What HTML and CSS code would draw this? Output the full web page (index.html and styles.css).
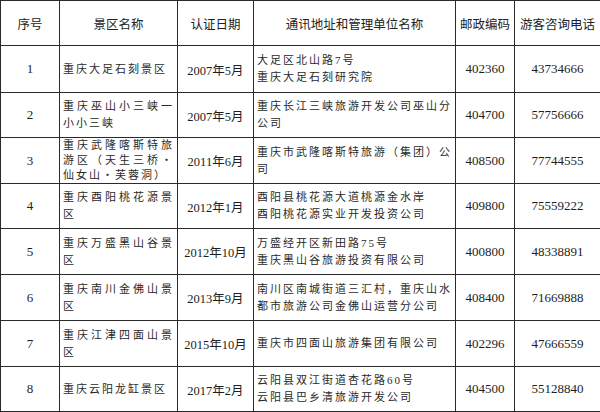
FILE: index.html
```html
<!DOCTYPE html>
<html lang="zh-CN">
<head>
<meta charset="utf-8">
<title>景区名单</title>
<link rel="stylesheet" href="styles.css">
</head>
<body>
<table class="list">
  <colgroup>
    <col class="c-no"><col class="c-name"><col class="c-date"><col class="c-addr"><col class="c-zip"><col class="c-tel">
  </colgroup>
  <thead>
    <tr class="h45">
      <th>序号</th><th>景区名称</th><th>认证日期</th><th>通讯地址和管理单位名称</th><th>邮政编码</th><th>游客咨询电话</th>
    </tr>
  </thead>
  <tbody>
    <tr class="h47">
      <td class="num">1</td><td class="txt">重庆大足石刻景区</td><td class="date">2007年5月</td>
      <td class="txt">大足区北山路7号<br>重庆大足石刻研究院</td><td class="num">402360</td><td class="num">43734666</td>
    </tr>
    <tr class="h45">
      <td class="num">2</td><td class="txt">重庆巫山小三峡一小小三峡</td><td class="date">2007年5月</td>
      <td class="txt">重庆长江三峡旅游开发公司巫山分公司</td><td class="num">404700</td><td class="num">57756666</td>
    </tr>
    <tr class="h46">
      <td class="num">3</td><td class="txt tight">重庆武隆喀斯特旅游区（天生三桥・仙女山・芙蓉洞）</td><td class="date">2011年6月</td>
      <td class="txt">重庆市武隆喀斯特旅游（集团）公司</td><td class="num">408500</td><td class="num">77744555</td>
    </tr>
    <tr class="h45">
      <td class="num">4</td><td class="txt">重庆酉阳桃花源景区</td><td class="date">2012年1月</td>
      <td class="txt">酉阳县桃花源大道桃源金水岸<br>酉阳桃花源实业开发投资公司</td><td class="num">409800</td><td class="num">75559222</td>
    </tr>
    <tr class="h46">
      <td class="num">5</td><td class="txt">重庆万盛黑山谷景区</td><td class="date">2012年10月</td>
      <td class="txt">万盛经开区新田路75号<br>重庆黑山谷旅游投资有限公司</td><td class="num">400800</td><td class="num">48338891</td>
    </tr>
    <tr class="h46">
      <td class="num">6</td><td class="txt">重庆南川金佛山景区</td><td class="date">2013年9月</td>
      <td class="txt">南川区南城街道三汇村，重庆山水都市旅游公司金佛山运营分公司</td><td class="num">408400</td><td class="num">71669888</td>
    </tr>
    <tr class="h46">
      <td class="num">7</td><td class="txt">重庆江津四面山景区</td><td class="date">2015年10月</td>
      <td class="txt">重庆市四面山旅游集团有限公司</td><td class="num">402296</td><td class="num">47666559</td>
    </tr>
    <tr class="h45">
      <td class="num">8</td><td class="txt">重庆云阳龙缸景区</td><td class="date">2017年2月</td>
      <td class="txt">云阳县双江街道杏花路60号<br>云阳县巴乡清旅游开发公司</td><td class="num">404500</td><td class="num">55128840</td>
    </tr>
  </tbody>
</table>
</body>
</html>
```

FILE: styles.css
```css
html, body {
  margin: 0;
  padding: 0;
  background: #ffffff;
}

.list {
  width: 600px;
  table-layout: fixed;
  border-collapse: collapse;
  color: #1e1e1e;
}

.c-no { width: 59px; }
.c-name { width: 118px; }
.c-date { width: 76px; }
.c-addr { width: 202px; }
.c-zip { width: 59px; }
.c-tel { width: 86px; }

.list th,
.list td {
  border: 1px solid #2a2a2a;
  padding: 0 3px;
  vertical-align: middle;
  overflow: hidden;
}

.h45 { height: 45px; }
.h46 { height: 46px; }
.h47 { height: 47px; }

.list th {
  font-family: "Noto Sans CJK SC", sans-serif;
  font-size: 12.5px;
  font-weight: normal;
  text-align: center;
  color: #222;
}

.num {
  font-family: "Liberation Serif", "Noto Sans CJK SC", serif;
  font-size: 13px;
  text-align: center;
}

.date {
  font-family: "Liberation Serif", "Noto Sans CJK SC", serif;
  font-size: 12.5px;
  text-align: center;
  white-space: nowrap;
}

.txt {
  font-family: "Liberation Serif", "Noto Sans CJK SC", serif;
  font-size: 11px;
  letter-spacing: 2px;
  line-height: 17px;
  text-align: justify;
  color: #2a2a2a;
}

.txt.tight {
  line-height: 15px;
}
```
